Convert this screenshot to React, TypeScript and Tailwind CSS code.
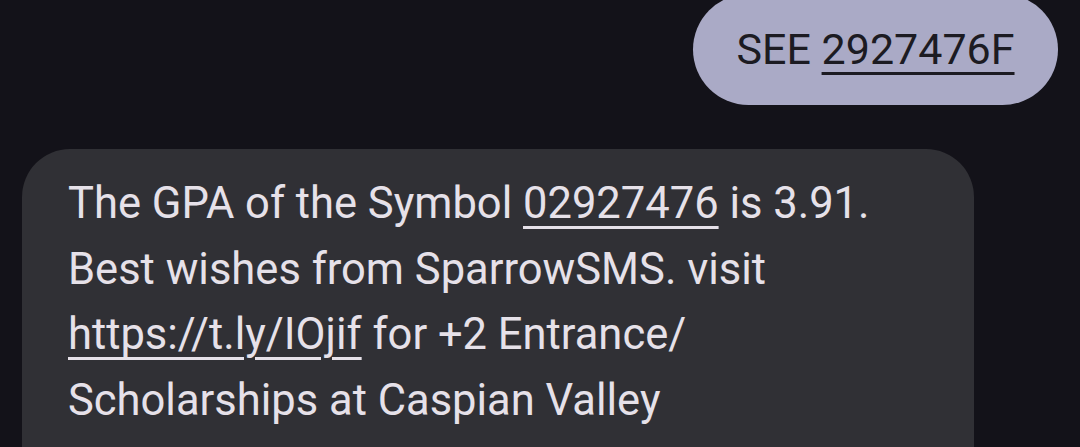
import React from 'react';

export default function App() {
  return (
    <div
      className="w-[1080px] h-[447px] overflow-hidden bg-[#131219] flex flex-col"
      style={{ fontFamily: 'Roboto, "Noto Sans", sans-serif' }}
    >
      <div className="flex justify-end pr-[22px] -mt-[6px]">
        <div className="bg-[#aaaac6] text-[#1c1b22] rounded-full h-[111px] w-[365px] pt-[34px] text-center text-[43px] leading-[43px]">
          SEE{' '}
          <span className="underline decoration-[3px] underline-offset-[8px]">2927476F</span>
        </div>
      </div>
      <div className="mt-[44px] pl-[22px]">
        <div className="bg-[#303035] rounded-t-[48px] w-[952px] h-[320px] px-[46px] pt-[22px] text-[#e6e1e9] text-[43.5px] leading-[65.7px]">
          <div>
            The GPA of the Symbol{' '}
            <span className="underline decoration-[3px] underline-offset-[8px]">02927476</span> is 3.91.
          </div>
          <div>Best wishes from SparrowSMS. visit</div>
          <div>
            <span className="underline decoration-[3px] underline-offset-[8px]">https://t.ly/IOjif</span> for +2 Entrance/
          </div>
          <div>Scholarships at Caspian Valley</div>
        </div>
      </div>
    </div>
  );
}
